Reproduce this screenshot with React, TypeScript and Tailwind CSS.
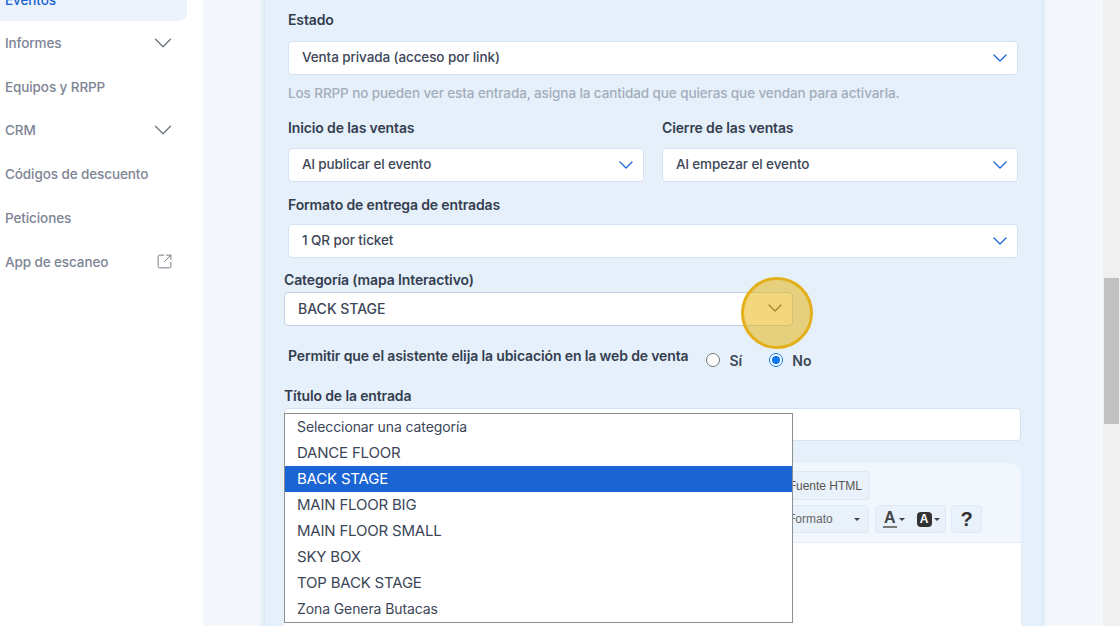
import { ChevronDown, SquareArrowOutUpRight } from 'lucide-react';

const font = 'font-["Inter","Noto_Sans",sans-serif]';

const navItems = [
  { label: 'Informes', chevron: true },
  { label: 'Equipos y RRPP' },
  { label: 'CRM', chevron: true },
  { label: 'Códigos de descuento' },
  { label: 'Peticiones' },
  { label: 'App de escaneo', external: true },
];

const categories = ['Seleccionar una categoría', 'DANCE FLOOR', 'BACK STAGE', 'MAIN FLOOR BIG', 'MAIN FLOOR SMALL', 'SKY BOX', 'TOP BACK STAGE', 'Zona Genera Butacas'];

function Sidebar() {
  return (
    <aside className="w-[203px] shrink-0 bg-white pr-4">
      <div className="-mt-[20px] flex h-[41px] items-center rounded-r-lg bg-[#edf3fc] pl-[5px] text-[13.5px] font-medium tracking-[-0.1px] text-[#1a64d3]">
        Eventos
      </div>
      <nav>
        {navItems.map((item) => (
          <div key={item.label} className="flex h-[43.8px] items-center justify-between pl-[5px] pr-[9px] text-[13.5px] font-medium tracking-[-0.1px] text-[#7d8494]">
            <span>{item.label}</span>
            {item.chevron && <ChevronDown size={30} strokeWidth={1} className="text-[#6b7280]" />}
            {item.external && <SquareArrowOutUpRight size={17} strokeWidth={1.3} className="mr-[5px] text-[#6b7280]" />}
          </div>
        ))}
      </nav>
    </aside>
  );
}

function Select({ value, className = '' }: { value: string; className?: string }) {
  return (
    <div className={`flex h-[34px] items-center justify-between rounded border border-[#d5e2f1] bg-white pl-[13px] pr-[5px] text-[13.5px] font-medium tracking-[-0.1px] text-[#3c4658] ${className}`}>
      <span className="pb-[2px]">{value}</span>
      <ChevronDown size={24} strokeWidth={1.3} className="text-[#1a64d3]" />
    </div>
  );
}

function Label({ children, className = '' }: { children: React.ReactNode; className?: string }) {
  return <div className={`text-[14px] font-semibold leading-[20px] tracking-[-0.13px] text-[#343e50] ${className}`}>{children}</div>;
}

function Caret() {
  return <span className="h-0 w-0 border-x-[3px] border-t-[3px] border-x-transparent border-t-[#444]" />;
}

function Toolbar() {
  return (
    <div className="h-[80px] rounded-t-xl border-b border-[#e4edf7] bg-[#f2f7fd] pt-[8px] font-['Liberation_Sans',sans-serif]">
      <div className="ml-[470px] flex h-[29px] w-[116px] items-center justify-end rounded border border-[#dde9f6] bg-[#e9f1fb] pr-[7px] text-[12px] text-[#555]">
        Fuente HTML
      </div>
      <div className="mt-[5px] flex h-[28px] items-center justify-end gap-[5px] pr-[39px]">
        <div className="mr-px flex h-[28px] w-[120px] items-center justify-between rounded border border-[#dde9f6] bg-[#e9f1fb] pl-[38px] pr-[8px] text-[12px] text-[#666]">
          <span>Formato</span>
          <Caret />
        </div>
        <div className="flex h-[28px] w-[71px] items-center gap-[2px] rounded border border-[#dde9f6] bg-[#e9f1fb] pl-[7px]">
          <span className="border-b-2 border-[#777] px-px text-[16px] font-bold leading-[16px] text-[#444]">A</span>
          <Caret />
          <span className="ml-[10px] flex h-[15px] w-[15px] items-center justify-center rounded-sm bg-[#333] text-[12px] font-bold text-white">A</span>
          <Caret />
        </div>
        <div className="flex h-[28px] w-[31px] items-center justify-center rounded border border-[#dde9f6] bg-[#e9f1fb] text-[20px] font-bold text-[#333]">
          ?
        </div>
      </div>
    </div>
  );
}

function CategoryDropdown() {
  return (
    <div className="absolute left-0 top-[143px] z-10 w-[509px] border border-[#8f8f8f] bg-white text-[#3c4658]">
      {categories.map((c) => (
        <div
          key={c}
          className={`flex h-[26px] items-center pl-[12px] ${c === c.toUpperCase() ? 'text-[15px] tracking-[-0.2px]' : 'pb-[2px] text-[14px] tracking-[-0.1px]'} ${c === 'BACK STAGE' ? 'bg-[#1a64d3] text-white' : ''}`}
        >
          {c}
        </div>
      ))}
    </div>
  );
}

function Radio({ label, checked }: { label: string; checked?: boolean }) {
  return (
    <div className="flex items-center gap-[9px] text-[14px] font-semibold text-[#3c4658]">
      {checked ? (
        <span className="flex h-[14px] w-[14px] items-center justify-center rounded-full border border-[#0b76ef] bg-white">
          <span className="h-[8px] w-[8px] rounded-full bg-[#0b76ef]" />
        </span>
      ) : (
        <span className="h-[14px] w-[14px] rounded-full border border-[#777] bg-white" />
      )}
      {label}
    </div>
  );
}

function TicketCard() {
  return (
    <section className="-mt-[10px] ml-[61px] h-[700px] w-[779px] border-x border-[#d9e7f6] bg-[#e6f0fa] pl-[19px] pr-[20px] pt-[20px] shadow-[0_0_6px_rgba(150,185,225,0.35)]">
      <div className="px-[4px]">
        <Label>Estado</Label>
        <Select value="Venta privada (acceso por link)" className="mt-[11px]" />
        <p className="mt-[8px] text-[13.5px] font-medium leading-[20px] tracking-[-0.1px] text-[#a3adbb]">
          Los RRPP no pueden ver esta entrada, asigna la cantidad que quieras que vendan para activarla.
        </p>
        <div className="mt-[15px] grid grid-cols-2 gap-x-[18px]">
          <div>
            <Label>Inicio de las ventas</Label>
            <Select value="Al publicar el evento" className="mt-[10px]" />
          </div>
          <div>
            <Label>Cierre de las ventas</Label>
            <Select value="Al empezar el evento" className="mt-[10px]" />
          </div>
        </div>
        <Label className="mt-[13px]">Formato de entrega de entradas</Label>
        <Select value="1 QR por ticket" className="mt-[9px]" />
      </div>

      <div className="relative">
        <Label className="mt-[12px]">Categoría (mapa Interactivo)</Label>
        <div className="relative mt-[2px] flex h-[34px] w-[509px] items-center rounded border border-[#c3d1e2] bg-white pb-[2px] pl-[13px] text-[14px] font-medium text-[#3c4658]">
          BACK STAGE
          <ChevronDown size={24} strokeWidth={1.2} className="absolute right-[5px] top-[3px] text-[#555]" />
        </div>
        <div className="absolute left-[457px] top-[7px] h-[72px] w-[72px] rounded-full border-[3px] border-[#e3b01c] bg-[#e6b000]/50" />

        <div className="mt-[16px] flex h-[36px] items-center pl-[4px]">
          <Label className="-mt-[8px]">Permitir que el asistente elija la ubicación en la web de venta</Label>
          <div className="ml-[18px] flex gap-[27px]">
            <Radio label="Sí" />
            <Radio label="No" checked />
          </div>
        </div>

        <Label className="mt-[8px]">Título de la entrada</Label>
        <div className="mt-[2px] h-[33px] w-[737px] rounded border border-[#d5e2f1] bg-white" />
        <div className="mt-[22px] w-[737px]">
          <Toolbar />
          <div className="h-[120px] bg-white" />
        </div>
        <CategoryDropdown />
      </div>
    </section>
  );
}

export default function App() {
  return (
    <div className={`flex h-[626px] w-[1120px] overflow-hidden bg-[#f4f8fc] antialiased ${font}`}>
      <Sidebar />
      <main className="flex-1 overflow-hidden">
        <TicketCard />
      </main>
      <div className="w-[17px] shrink-0 bg-[#f0f0f0] pt-[278px]">
        <div className="ml-px h-[146px] w-[15px] bg-[#c1c1c1]" />
      </div>
    </div>
  );
}
